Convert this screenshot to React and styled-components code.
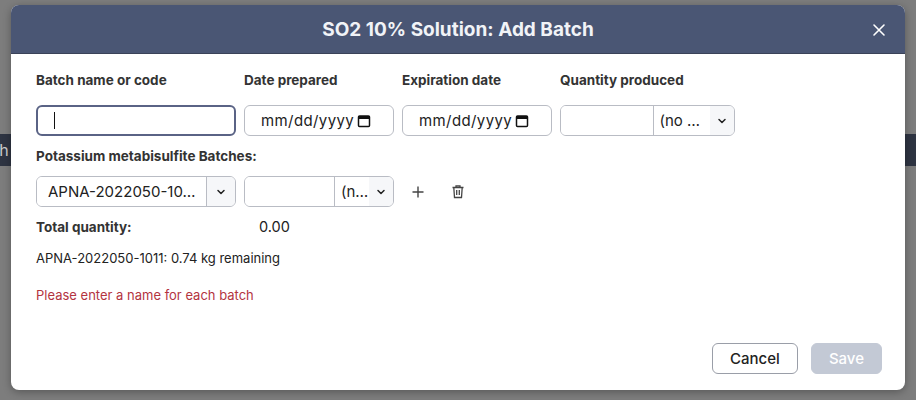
import React from "react";
import styled, { createGlobalStyle } from "styled-components";

const Global = createGlobalStyle`
  html, body { margin: 0; padding: 0; }
  body { font-family: Inter, "Noto Sans", sans-serif; background: #7d7d7d; width: 916px; height: 400px; overflow: hidden; position: relative; }
`;

const BackStrip = styled.div`
  position: absolute; left: 0; top: 134px; width: 916px; height: 32px; background: #2e3442;
  color: #ccc; font-size: 16px; line-height: 32px; text-indent: -10px;
`;

const Overlay = styled.div`
  position: relative; padding: 5px 11px 0 11px;
`;

const Modal = styled.div`
  background: #fff; border-radius: 8px; overflow: hidden; height: 385px;
  display: flex; flex-direction: column; box-shadow: 0 2px 8px rgba(0,0,0,0.3);
`;

const Header = styled.div`
  height: 48px; background: #4a5674; display: flex; align-items: center; justify-content: center;
  position: relative; color: #f1f3f7; font-size: 19px; font-weight: 700; border-bottom: 1px solid #3a4258;
`;

const Close = styled.div`
  position: absolute; right: 18px; top: 15px; width: 16px; height: 16px;
`;

const Body = styled.div`
  flex: 1; padding: 18px 25px 0 25px; display: flex; flex-direction: column; color: #222;
`;

const Grid = styled.div`
  display: flex; gap: 8px;
`;

const Field = styled.div`
  display: flex; flex-direction: column; gap: 16px; width: ${p => p.w}px;
`;

const Label = styled.div`
  font-size: 13.5px; font-weight: 700; color: #333; line-height: 17px;
`;

const Box = styled.div`
  height: 31px; box-sizing: border-box; border: ${p => p.focus ? "2px solid #5a6385" : "1px solid #b9bcc4"};
  border-radius: 6px; display: flex; align-items: center; font-size: 15px; color: #222;
  width: ${p => p.w ? p.w + "px" : "auto"}; overflow: hidden; background: #fff;
`;

const Caret = styled.div`
  width: 1px; height: 17px; background: #111; margin-left: 16px;
`;

const DateText = styled.div`
  flex: 1; padding-left: 16px; letter-spacing: 0.4px; display: flex; align-items: center; gap: 3px;
`;

const Seg = styled.div`
  height: 100%; display: flex; align-items: center; box-sizing: border-box;
  width: ${p => p.w}px; ${p => p.border ? "border-right: 1px solid #b9bcc4;" : ""}
  padding-left: ${p => p.pl || 0}px; background: ${p => p.bg || "#fff"};
  justify-content: ${p => p.center ? "center" : "flex-start"};
`;

const SectionLabel = styled(Label)`
  margin-top: 12px; margin-bottom: 11px;
`;

const Row = styled.div`
  display: flex; align-items: center; gap: 8px;
`;

const IconBtn = styled.div`
  width: 32px; display: flex; justify-content: center; align-items: center; color: #444;
`;

const TotalRow = styled.div`
  display: flex; margin-top: 11px; font-size: 14.5px; line-height: 18px;
`;

const TotalLabel = styled.div`
  width: 223px; font-size: 13.5px; font-weight: 700; color: #333;
`;

const Note = styled.div`
  font-size: 13px; color: ${p => p.err ? "#b3343f" : "#222"}; margin-top: ${p => p.mt}px; line-height: 16px;
`;

const Footer = styled.div`
  display: flex; justify-content: flex-end; gap: 13px; padding: 0 23px 16px 0;
`;

const Button = styled.div`
  height: 31px; box-sizing: border-box; border-radius: 6px; padding: 0 ${p => p.px}px;
  display: flex; align-items: center; font-size: 15px; font-weight: 500;
  ${p => p.disabled ? "background: #c3c9d5; color: #fff; border: 1px solid #c3c9d5;" : "background: #fff; color: #222; border: 1px solid #9a9ea8;"}
`;

const Chevron = () => (
  <svg width="12" height="12" viewBox="0 0 12 12"><path d="M3 4.5l3 3 3-3" fill="none" stroke="#222" strokeWidth="1.5" strokeLinecap="round" strokeLinejoin="round"/></svg>
);
const Cal = () => (
  <svg width="14" height="14" viewBox="0 0 14 14"><rect x="1.5" y="2" width="11" height="10.5" rx="1" fill="none" stroke="#111" strokeWidth="1.5"/><rect x="1.5" y="2" width="11" height="3" fill="#111"/></svg>
);

export default function App() {
  return (
    <>
      <Global />
      <BackStrip>ch</BackStrip>
      <Overlay>
        <Modal>
          <Header>
            SO2 10% Solution: Add Batch
            <Close>
              <svg width="16" height="16" viewBox="0 0 16 16"><path d="M3 3l10 10M13 3L3 13" stroke="#fff" strokeWidth="1.6" strokeLinecap="round"/></svg>
            </Close>
          </Header>
          <Body>
            <Grid>
              <Field w={200}><Label>Batch name or code</Label><Box focus><Caret /></Box></Field>
              <Field w={150}><Label>Date prepared</Label><Box><DateText>mm/dd/yyyy <Cal /></DateText></Box></Field>
              <Field w={150}><Label>Expiration date</Label><Box><DateText>mm/dd/yyyy <Cal /></DateText></Box></Field>
              <Field w={175}><Label>Quantity produced</Label>
                <Box>
                  <Seg w={94} border />
                  <Seg w={56} pl={5}>(no …</Seg>
                  <Seg w={24} center bg="#f6f7f9"><Chevron /></Seg>
                </Box>
              </Field>
            </Grid>
            <SectionLabel>Potassium metabisulfite Batches:</SectionLabel>
            <Row>
              <Box w={200}>
                <Seg w={170} pl={11} border>APNA-2022050-10…</Seg>
                <Seg w={28} center bg="#f6f7f9"><Chevron /></Seg>
              </Box>
              <Box w={150}>
                <Seg w={90} border />
                <Seg w={34} pl={6}>(n…</Seg>
                <Seg w={24} center bg="#f6f7f9"><Chevron /></Seg>
              </Box>
              <IconBtn>
                <svg width="14" height="14" viewBox="0 0 14 14"><path d="M7 1.5v11M1.5 7h11" stroke="#444" strokeWidth="1.4"/></svg>
              </IconBtn>
              <IconBtn>
                <svg width="14" height="15" viewBox="0 0 14 15"><path d="M1.5 3.5h11M5 3.5V1.8h4v1.7M2.8 3.5l.7 10h7l.7-10M5.7 6v5M8.3 6v5" fill="none" stroke="#444" strokeWidth="1.3"/></svg>
              </IconBtn>
            </Row>
            <TotalRow><TotalLabel>Total quantity:</TotalLabel><span>0.00</span></TotalRow>
            <Note mt={14}>APNA-2022050-1011: 0.74 kg remaining</Note>
            <Note err mt={21}>Please enter a name for each batch</Note>
          </Body>
          <Footer>
            <Button px={17}>Cancel</Button>
            <Button px={17} disabled>Save</Button>
          </Footer>
        </Modal>
      </Overlay>
    </>
  );
}
